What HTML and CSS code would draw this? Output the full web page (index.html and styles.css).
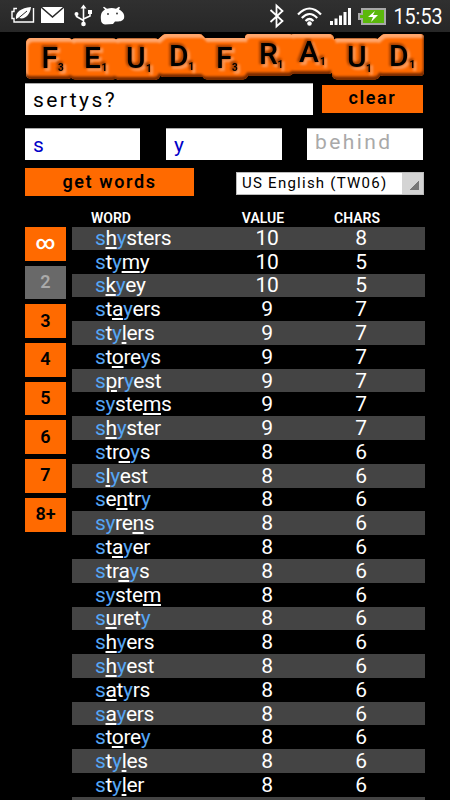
FILE: index.html
```html
<!DOCTYPE html>
<html lang="en">
<head>
    <meta charset="UTF-8">
    <meta name="viewport" content="width=device-width, initial-scale=1.0">
    <title>Feud Fraud</title>
    <link rel="stylesheet" href="styles.css">
</head>
<body>
    <div class="status-bar">
        <svg width="450" height="32" viewBox="0 0 450 32">
            <!-- power saver -->
            <path d="M17 8.500h-3v3h-2v7h2v3.500h19.500V8" fill="none" stroke="#fff" stroke-width="1.400"/>
            <path d="M16 19c-1-7 5-11 15-12-1 8-6 13-12 11z" fill="#fff"/>
            <path d="M15 21l12-10" stroke="#292929" stroke-width="1"/>
            <!-- mail -->
            <path d="M41 7h23v16H41z" fill="#fff"/>
            <path d="M41 7l11.500 10L64 7" fill="none" stroke="#292929" stroke-width="1.600"/>
            <!-- usb -->
            <path d="M83.500 7v17M76.500 14v2.500l7 4M90 13v3l-6.500 3" fill="none" stroke="#fff" stroke-width="1.600"/>
            <path d="M80.500 8.500l3-4 3 4z" fill="#fff"/>
            <circle cx="76.500" cy="14" r="2" fill="#fff"/>
            <path d="M88 10h4v4h-4z" fill="#fff"/>
            <circle cx="83.500" cy="24" r="2.300" fill="#fff"/>
            <!-- android -->
            <path d="M101 20c-.5-5 0-8 4-10.500l-2-2 1-.7 3 2q5-1.500 9 0l3-2 1 .7-1 2c4 2 6 5 5 9-2 3-4 3-9 3l-2 2.500-8 .5c-2.500-.5-4-2-4-4.500z" fill="#fff"/>
            <circle cx="108" cy="14" r=".9" fill="#292929"/>
            <circle cx="117" cy="13.500" r=".9" fill="#292929"/>
            <!-- bluetooth -->
            <path d="M270.500 10l12 11-6 5.500V5.500l6 5.500-12 11" fill="none" stroke="#fff" stroke-width="1.800"/>
            <!-- wifi -->
            <path d="M298 14.500q11.500-12 23 0M301.800 18q7.700-8 15.400 0M305.500 21q4-4 8 0" fill="none" stroke="#fff" stroke-width="2.200"/>
            <circle cx="309.500" cy="23.500" r="2.300" fill="#fff"/>
            <!-- signal -->
            <path d="M330 21h3v4h-3zM334.500 18.500h3V25h-3zM339 15.500h3V25h-3zM343.500 12h3v13h-3zM348 8h3v17h-3z" fill="#fff"/>
            <!-- battery -->
            <path d="M361 8h25v17h-25v-5h-3v-7h3z" fill="#a8a8a8"/>
            <path d="M363 10h21v13h-21v-5h-3v-3h3z" fill="#5bb80c"/>
            <path d="M375 11l-7 6h5l-2 5 7-7h-5z" fill="#fff"/>
            <text class="clock" x="393.500" y="23.500" textLength="49" lengthAdjust="spacingAndGlyphs">15:53</text>
        </svg>
    </div>

    <div class="container">
        <svg class="logo" width="400" height="48" viewBox="25 32 400 48">
            <defs>
                <!-- raised tile edges, lit from the top left -->
                <filter id="raised" x="-2%" y="-10%" width="104%" height="120%" color-interpolation-filters="sRGB">
                    <feGaussianBlur in="SourceAlpha" stdDeviation="1" result="blur"/>
                    <feOffset in="blur" dx="2" dy="4" result="down"/>
                    <feComposite in="SourceAlpha" in2="down" operator="out" result="lit"/>
                    <feFlood flood-color="#ffa66c"/>
                    <feComposite in2="lit" operator="in" result="light"/>
                    <feOffset in="blur" dx="-1.5" dy="-3.5" result="up"/>
                    <feComposite in="SourceAlpha" in2="up" operator="out" result="shade"/>
                    <feFlood flood-color="#7a2c00"/>
                    <feComposite in2="shade" operator="in" result="dark"/>
                    <feMerge>
                        <feMergeNode in="SourceGraphic"/>
                        <feMergeNode in="light"/>
                        <feMergeNode in="dark"/>
                    </feMerge>
                </filter>
                <!-- letters pressed into the tiles -->
                <filter id="pressed" x="-2%" y="-20%" width="104%" height="140%" color-interpolation-filters="sRGB">
                    <feMorphology in="SourceAlpha" operator="dilate" radius="1" result="fat"/>
                    <feGaussianBlur in="fat" stdDeviation=".9" result="soft"/>
                    <feOffset in="soft" dx="-1.500" dy="-1" result="tl"/>
                    <feFlood flood-color="#a64000"/>
                    <feComposite in2="tl" operator="in" result="dark"/>
                    <feOffset in="soft" dx="2" dy="2" result="br"/>
                    <feFlood flood-color="#ff9a58"/>
                    <feComposite in2="br" operator="in" result="light"/>
                    <feMerge>
                        <feMergeNode in="light"/>
                        <feMergeNode in="dark"/>
                        <feMergeNode in="SourceGraphic"/>
                    </feMerge>
                </filter>
            </defs>
            <g class="tiles">
                <rect x="26" y="38" width="47" height="41" rx="5"/>
                <rect x="70" y="38.500" width="48" height="41" rx="5"/>
                <rect x="114" y="38.500" width="46" height="41.500" rx="5"/>
                <path d="M155 42l8-7q1-1 4-1h32q3 0 4 2l5 5v32q0 4-4 4h-41q-8-2-8-8z"/>
                <rect x="202" y="38" width="46" height="41.500" rx="5"/>
                <rect x="245" y="34" width="48" height="41.500" rx="4"/>
                <rect x="289" y="34" width="45" height="40" rx="5"/>
                <rect x="332" y="38.500" width="48" height="41" rx="5"/>
                <path d="M374 42l8-7q1-1 4-1h34q4 0 4 4v34q0 4-4 4h-37q-8-1-9-6z"/>
            </g>
            <g class="letters">
                <text x="41.500" y="68">F</text>
                <text x="84" y="68">E</text>
                <text x="126" y="68">U</text>
                <text x="169" y="66">D</text>
                <text x="216" y="68">F</text>
                <text x="259" y="64">R</text>
                <text x="299" y="62">A</text>
                <text x="347" y="67">U</text>
                <text x="389" y="66">D</text>
            </g>
            <g class="points">
                <text x="58" y="71">3</text>
                <text x="101.500" y="71">1</text>
                <text x="146" y="72">1</text>
                <text x="188.500" y="70">1</text>
                <text x="232" y="71">3</text>
                <text x="277.500" y="68">1</text>
                <text x="320" y="65">1</text>
                <text x="366" y="72">1</text>
                <text x="409.500" y="68">1</text>
            </g>
        </svg>

        <div class="search-row">
            <input class="letters-input" value="sertys?">
            <button class="clear">clear</button>
        </div>
        <div class="filter-row">
            <input class="blue" value="s">
            <input class="blue" value="y">
            <input class="behind" placeholder="behind">
        </div>
        <div class="action-row">
            <button class="get-words">get words</button>
            <div class="select">
                <span>US English (TW06)</span>
                <div class="arrow"></div>
            </div>
        </div>

        <div class="results">
            <div class="lengths">
                <button class="all">∞</button>
                <button class="off">2</button>
                <button>3</button>
                <button>4</button>
                <button>5</button>
                <button>6</button>
                <button>7</button>
                <button>8+</button>
            </div>
            <table>
                <thead>
                    <tr><th class="word">WORD</th><th class="value">VALUE</th><th class="chars">CHARS</th></tr>
                </thead>
                <tbody>
                    <tr><td class="word"><i>s</i><u>h</u><i>y</i>sters</td><td>10</td><td class="chars">8</td></tr>
                    <tr><td class="word"><i>s</i>t<i>y</i><u>m</u>y</td><td>10</td><td class="chars">5</td></tr>
                    <tr><td class="word"><i>s</i><u>k</u><i>y</i>ey</td><td>10</td><td class="chars">5</td></tr>
                    <tr><td class="word"><i>s</i>t<u>a</u><i>y</i>ers</td><td>9</td><td class="chars">7</td></tr>
                    <tr><td class="word"><i>s</i>t<i>y</i><u>l</u>ers</td><td>9</td><td class="chars">7</td></tr>
                    <tr><td class="word"><i>s</i>t<u>o</u>re<i>y</i>s</td><td>9</td><td class="chars">7</td></tr>
                    <tr><td class="word"><i>s</i><u>p</u>r<i>y</i>est</td><td>9</td><td class="chars">7</td></tr>
                    <tr><td class="word"><i>sy</i>ste<u>m</u>s</td><td>9</td><td class="chars">7</td></tr>
                    <tr><td class="word"><i>s</i><u>h</u><i>y</i>ster</td><td>9</td><td class="chars">7</td></tr>
                    <tr><td class="word"><i>s</i>tr<u>o</u><i>y</i>s</td><td>8</td><td class="chars">6</td></tr>
                    <tr><td class="word"><i>s</i><u>l</u><i>y</i>est</td><td>8</td><td class="chars">6</td></tr>
                    <tr><td class="word"><i>s</i>e<u>n</u>tr<i>y</i></td><td>8</td><td class="chars">6</td></tr>
                    <tr><td class="word"><i>sy</i>re<u>n</u>s</td><td>8</td><td class="chars">6</td></tr>
                    <tr><td class="word"><i>s</i>t<u>a</u><i>y</i>er</td><td>8</td><td class="chars">6</td></tr>
                    <tr><td class="word"><i>s</i>tr<u>a</u><i>y</i>s</td><td>8</td><td class="chars">6</td></tr>
                    <tr><td class="word"><i>sy</i>ste<u>m</u></td><td>8</td><td class="chars">6</td></tr>
                    <tr><td class="word"><i>s</i><u>u</u>ret<i>y</i></td><td>8</td><td class="chars">6</td></tr>
                    <tr><td class="word"><i>s</i><u>h</u><i>y</i>ers</td><td>8</td><td class="chars">6</td></tr>
                    <tr><td class="word"><i>s</i><u>h</u><i>y</i>est</td><td>8</td><td class="chars">6</td></tr>
                    <tr><td class="word"><i>s</i><u>a</u>t<i>y</i>rs</td><td>8</td><td class="chars">6</td></tr>
                    <tr><td class="word"><i>s</i><u>a</u><i>y</i>ers</td><td>8</td><td class="chars">6</td></tr>
                    <tr><td class="word"><i>s</i>t<u>o</u>re<i>y</i></td><td>8</td><td class="chars">6</td></tr>
                    <tr><td class="word"><i>s</i>t<i>y</i><u>l</u>es</td><td>8</td><td class="chars">6</td></tr>
                    <tr><td class="word"><i>s</i>t<i>y</i><u>l</u>er</td><td>8</td><td class="chars">6</td></tr>
                    <tr><td class="word"></td><td></td><td></td></tr>
                </tbody>
            </table>
        </div>
    </div>
</body>
</html>
```
FILE: styles.css
```css
* {
    box-sizing: border-box;
}

body {
    margin: 0;
    height: 800px;
    overflow: hidden;
    background-color: #000;
    color: #fff;
    font-family: Roboto, sans-serif;
}

.status-bar {
    height: 32px;
    background: linear-gradient(#303030, #272727);
}

.status-bar svg, .logo {
    display: block;
}

.clock {
    font-size: 22px;
    fill: #fff;
}

.container {
    padding: 0 25px;
}

/* Scrabble style tiles */
.tiles {
    fill: #ff6a00;
    filter: url(#raised);
}

.letters {
    font-size: 30px;
    font-weight: 500;
    filter: url(#pressed);
}

.points {
    font-size: 10px;
    font-weight: bold;
    filter: url(#pressed);
}

input, button {
    display: block;
    border: none;
    border-radius: 0;
    font-family: Roboto, sans-serif;
    outline: none;
}

input {
    height: 32px;
    padding: 0 8px;
    border-top: 1px solid #aaa;
    background-color: #fff;
    font-size: 21px;
    letter-spacing: 2.4px;
}

button {
    padding: 0;
    background-color: #ff6a00;
    color: #000;
    font-weight: 600;
}

.search-row {
    display: flex;
    gap: 9px;
    height: 48px;
    padding-top: 3px;
}

.letters-input {
    width: 288px;
}

.clear {
    width: 101px;
    height: 28px;
    margin-top: 2px;
    padding-bottom: 3px;
    font-size: 18px;
    letter-spacing: 1.6px;
}

.filter-row {
    display: grid;
    grid-template-columns: 115px 116px 116px;
    gap: 26px;
    height: 40px;
}

.filter-row input {
    width: 100%;
}

.blue {
    color: #0000c8;
}

.filter-row .behind {
    width: 116px;
    margin-left: -1px;
    padding: 0 8px 6px;
}

.behind::placeholder {
    color: #a9a9a9;
}

.action-row {
    display: flex;
    justify-content: space-between;
    height: 40px;
    margin-right: 1px;
}

.get-words {
    width: 169px;
    height: 28px;
    padding-bottom: 2px;
    font-size: 18px;
    letter-spacing: 1.6px;
}

.select {
    display: flex;
    justify-content: space-between;
    width: 188px;
    height: 23px;
    margin-top: 4px;
    padding-left: 5px;
    border: 1px solid #bbb;
    background-color: #fff;
    color: #000;
    font-size: 15px;
    line-height: 21px;
    letter-spacing: 1.25px;
}

.arrow {
    width: 21px;
    background: linear-gradient(135deg, transparent 50%, #777 50%) 7px 7px / 10px 10px no-repeat #d4d4d4;
}

.results {
    display: flex;
    gap: 6px;
}

.lengths {
    display: flex;
    flex-direction: column;
    gap: 5px;
    width: 41px;
    padding-top: 19px;
}

.lengths button {
    width: 41px;
    height: 33.7px;
    flex: none;
    padding-bottom: 2px;
    font-size: 18px;
}

.lengths .all {
    color: #fff;
    font-size: 19px;
}

.lengths .off {
    background-color: #696969;
    color: #aaa;
}

table {
    width: 353px;
    table-layout: fixed;
    border-collapse: collapse;
}

thead tr {
    height: 19px;
}

th {
    padding: 0;
    font-size: 14px;
    font-weight: 600;
    line-height: 18px;
}

td {
    height: 23.79px;
    padding: 0;
    font-size: 21px;
    line-height: 22px;
    letter-spacing: -0.35px;
    text-align: center;
}

tbody tr:first-child td {
    height: 22.79px;
}

.word {
    width: 144px;
    padding-left: 23px;
    text-align: left;
}

th.word {
    padding-left: 19px;
}

.value {
    width: 102px;
    padding-right: 8px;
}

.chars {
    padding-right: 21px;
}

th.chars {
    padding-right: 29px;
}

tbody tr:nth-child(odd) {
    background-color: #444;
}

i {
    color: #55a5f5;
    font-style: normal;
}

u {
    text-decoration-thickness: 1.5px;
    text-underline-offset: 2px;
}
```
